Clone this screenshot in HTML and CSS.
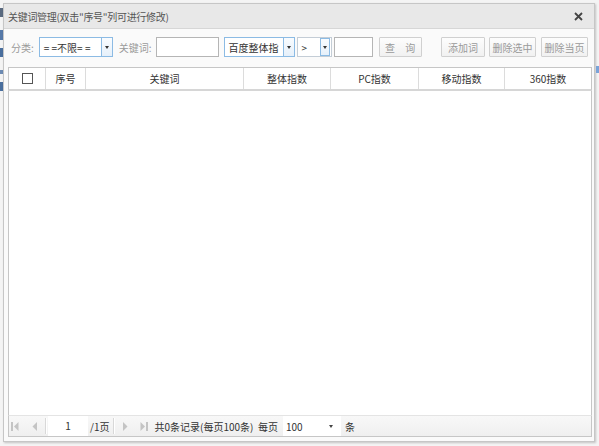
FILE: index.html
```html
<!DOCTYPE html>
<html>
<head>
<meta charset="utf-8">
<link rel="stylesheet" href="styles.css">
</head>
<body>
<div class="backdrop">
  <div class="bg-left">
    <i class="frag f1"></i>
    <i class="frag f2"></i>
    <i class="frag f3"></i>
    <i class="frag f4"></i>
    <i class="frag f5"></i>
  </div>
  <div class="dialog">
    <div class="titlebar">
      <span class="title">关键词管理(双击"序号"列可进行修改)</span>
      <span class="close"><svg width="9" height="9" viewBox="0 0 9 9"><path d="M1 1 L8 8 M8 1 L1 8" stroke="#444" stroke-width="1.8"/></svg></span>
    </div>
    <div class="toolbar">
      <span class="lbl">分类:</span>
      <div class="combo c1"><span class="ctext">= =不限= =</span><span class="cbtn"><i class="arr"></i></span></div>
      <span class="lbl l2">关键词:</span>
      <div class="input i1"></div>
      <div class="combo c2"><span class="ctext">百度整体指</span><span class="cbtn"><i class="arr"></i></span></div>
      <div class="combo c3"><span class="ctext">&gt;</span><span class="cbtn"><i class="arr"></i></span></div>
      <div class="input i2"></div>
      <button class="btn q">查 询</button>
      <div class="spacer"></div>
      <button class="btn b1">添加词</button>
      <button class="btn b2">删除选中</button>
      <button class="btn b3">删除当页</button>
    </div>
    <div class="grid">
      <div class="ghead">
        <div class="gc w-chk"><span class="chk"></span></div>
        <div class="gc w-no">序号</div>
        <div class="gc w-kw">关键词</div>
        <div class="gc w-a">整体指数</div>
        <div class="gc w-b">PC指数</div>
        <div class="gc w-c">移动指数</div>
        <div class="gc w-d last">360指数</div>
      </div>
      <div class="gbody"></div>
      <div class="pager">
        <span class="pi first"><svg width="8" height="9" viewBox="0 0 8 9"><rect x="0" y="0" width="2" height="9" fill="#c4c4c4"/><path d="M7.5 0 L3 4.5 L7.5 9 Z" fill="#c4c4c4"/></svg></span>
        <span class="pi prev"><svg width="5" height="9" viewBox="0 0 5 9"><path d="M5 0 L0.5 4.5 L5 9 Z" fill="#c4c4c4"/></svg></span>
        <span class="psep s1"></span>
        <div class="pinput">1</div>
        <span class="ptext pg">/1页</span>
        <span class="psep s2"></span>
        <span class="pi next"><svg width="5" height="9" viewBox="0 0 5 9"><path d="M0 0 L4.5 4.5 L0 9 Z" fill="#c4c4c4"/></svg></span>
        <span class="pi last2"><svg width="8" height="9" viewBox="0 0 8 9"><path d="M0.5 0 L5 4.5 L0.5 9 Z" fill="#c4c4c4"/><rect x="6" y="0" width="2" height="9" fill="#c4c4c4"/></svg></span>
        <span class="ptext info">共0条记录(每页100条)&nbsp; 每页</span>
        <div class="psel"><span>100</span><i class="arr dark"></i></div>
        <span class="ptext tiao">条</span>
      </div>
    </div>
  </div>
  <div class="bg-right">
    <i class="frag r1"></i>
  </div>
</div>
</body>
</html>
```
FILE: styles.css
```css
* { box-sizing: border-box; }
html, body { margin: 0; padding: 0; }
body {
  width: 599px; height: 446px; overflow: hidden;
  font-family: "Noto Sans CJK SC", "Liberation Sans", sans-serif;
  font-size: 10px; color: #333;
  background: #f3f3f3;
}
.backdrop { position: relative; width: 599px; height: 446px; background: #f4f4f4; }
.bg-left { position: absolute; left: 0; top: 0; width: 3px; height: 446px; overflow: hidden; }
.frag { position: absolute; left: 0; width: 3px; display: block; }
.f1 { top: 8px; height: 9px; background: #5a6a80; }
.f2 { top: 30px; height: 10px; background: #5679a8; }
.f3 { top: 48px; height: 9px; background: #4a6f9e; }
.f4 { top: 70px; height: 4px; background: #6d8bb3; }
.f5 { top: 82px; height: 9px; background: #4a6f9e; }
.bg-right { position: absolute; right: 0; top: 0; width: 4px; height: 446px; overflow: hidden; }
.r1 { top: 66px; height: 7px; width: 3px; left: 1px; background: #7aa3d8; }

.dialog {
  position: absolute; left: 3px; top: 3px; width: 592px; height: 439px;
  background: #fafafa;
  border: 1px solid #c6c6c6;
  box-shadow: 1px 1px 2px rgba(0,0,0,0.2);
  display: flex; flex-direction: column;
}
.titlebar {
  height: 25px; flex: none;
  background: #e8e8e8;
  border-bottom: 1px solid #d6d6d6;
  display: flex; align-items: center; justify-content: space-between;
  padding: 0 11px 0 4px;
}
.title { color: #555; font-size: 10px; white-space: nowrap; letter-spacing: -0.3px; }
.close { display: flex; }

.toolbar {
  height: 36px; flex: none;
  display: flex; align-items: center;
  padding: 0 6px 0 7px;
  white-space: nowrap;
}
.lbl { color: #9a9a9a; font-size: 10px; }
.l2 { margin-left: 6px; }
.combo {
  height: 20px; display: flex; align-items: center;
  border: 1px solid #8cbbe4; background: #fff;
}
.combo.c1 { width: 74px; margin-left: 5px; }
.combo.c2 { width: 71px; margin-left: 5px; }
.combo.c3 { width: 35px; margin-left: 2px; border-color: #c4cdd6; }
.ctext { flex: 1; padding-left: 4px; font-size: 10px; color: #333; white-space: nowrap; overflow: hidden; }
.cbtn {
  width: 11px; height: 18px; border-left: 1px solid #8cbbe4;
  background: linear-gradient(#f9fcff, #e6f0fa);
  display: flex; align-items: center; justify-content: center;
}
.c3 .cbtn { border: 1px solid #8cbbe4; height: 18px; width: 10px; margin-right: 1px; }
.arr { display: block; width: 0; height: 0; border-left: 2px solid transparent; border-right: 2px solid transparent; border-top: 3px solid #333; }
.input { height: 20px; border: 1px solid #b5b5b5; background: #fff; }
.i1 { width: 63px; margin-left: 4px; }
.i2 { width: 39px; margin-left: 2px; }
.btn {
  height: 20px; border: 1px solid #d0d0d0; background: linear-gradient(#fdfdfd, #f1f1f1);
  font-family: inherit; font-size: 10px; color: #9a9a9a; padding: 0;
  white-space: nowrap; border-radius: 1px;
}
.btn.q { width: 43px; margin-left: 6px; letter-spacing: 4px; text-indent: 4px; }
.btn.b1 { width: 44px; }
.btn.b2 { width: 47px; margin-left: 4px; }
.btn.b3 { width: 47px; margin-left: 5px; }
.spacer { flex: 1; }

.grid {
  flex: 1; display: flex; flex-direction: column;
  margin: 2px 2px 4px 4px;
}
.ghead {
  height: 24px; flex: none; display: flex;
  background: #fff; border: 1px solid #c6c6c6;
  border-bottom: 2px solid #d6d6d6;
}
.gc {
  display: flex; align-items: center; justify-content: center;
  border-right: 1px solid #dcdcdc; font-size: 10px; color: #333; white-space: nowrap;
}
.gc.last { border-right: none; }
.w-chk { width: 37px; }
.w-no { width: 40px; }
.w-kw { width: 158px; }
.w-a { width: 87px; }
.w-b { width: 88px; }
.w-c { width: 86px; }
.w-d { flex: 1; }
.chk { width: 11px; height: 11px; border: 1px solid #555; background: #fff; }
.gbody { flex: 1; background: #fff; border-left: 1px solid #c6c6c6; border-right: 1px solid #c6c6c6; }
.pager {
  height: 22px; flex: none; display: flex; align-items: center;
  background: linear-gradient(#f8f8f8, #efefef);
  border: 1px solid #c6c6c6; border-top: 1px solid #e4e4e4;
  padding-left: 2px; white-space: nowrap;
}
.pi { display: flex; align-items: center; }
.pi.prev { margin-left: 13px; }
.psep { width: 2px; height: 16px; border-left: 1px solid #d8d8d8; border-right: 1px solid #fff; }
.psep.s1 { margin-left: 8px; margin-right: 1px; }
.pinput { width: 40px; height: 20px; background: #fff; text-align: center; line-height: 20px; font-size: 10px; color: #333; }
.ptext { font-size: 10px; color: #333; }
.pg { margin: 0 4px 0 2px; }
.pi.next { margin-left: 8px; }
.pi.last2 { margin-left: 12px; }
.info { margin-left: 6px; margin-right: 5px; }
.psel { width: 58px; height: 20px; background: #fff; display: flex; align-items: center; justify-content: space-between; padding: 0 8px 0 3px; font-size: 10px; }
.tiao { margin-left: 4px; }
.arr.dark { border-top-color: #444; }
```
